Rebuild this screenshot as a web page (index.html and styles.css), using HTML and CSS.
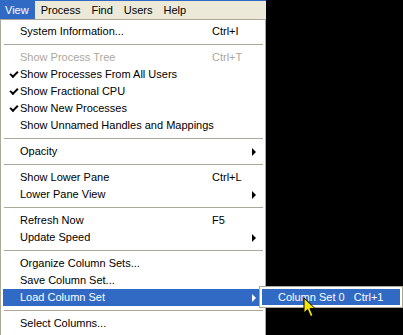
FILE: index.html
```html
<!DOCTYPE html>
<html lang="en">
<head>
  <meta charset="UTF-8" />
  <title>View menu</title>
  <link rel="stylesheet" href="styles.css">
</head>
<body>

<div class="screen">
  <div class="app">
    <div class="menubar">
      <span class="top-item open">View</span>
      <span class="top-item">Process</span>
      <span class="top-item">Find</span>
      <span class="top-item">Users</span>
      <span class="top-item">Help</span>
    </div>

    <div class="menu">
      <div class="item"><span class="label">System Information...</span><span class="key">Ctrl+I</span></div>
      <div class="sep"></div>
      <div class="item disabled"><span class="label">Show Process Tree</span><span class="key">Ctrl+T</span></div>
      <div class="item checked"><span class="label">Show Processes From All Users</span></div>
      <div class="item checked"><span class="label">Show Fractional CPU</span></div>
      <div class="item checked"><span class="label">Show New Processes</span></div>
      <div class="item"><span class="label">Show Unnamed Handles and Mappings</span></div>
      <div class="sep"></div>
      <div class="item sub"><span class="label">Opacity</span></div>
      <div class="sep"></div>
      <div class="item"><span class="label">Show Lower Pane</span><span class="key">Ctrl+L</span></div>
      <div class="item sub"><span class="label">Lower Pane View</span></div>
      <div class="sep"></div>
      <div class="item"><span class="label">Refresh Now</span><span class="key">F5</span></div>
      <div class="item sub"><span class="label">Update Speed</span></div>
      <div class="sep"></div>
      <div class="item"><span class="label">Organize Column Sets...</span></div>
      <div class="item"><span class="label">Save Column Set...</span></div>
      <div class="item sub active"><span class="label">Load Column Set</span></div>
      <div class="sep"></div>
      <div class="item"><span class="label">Select Columns...</span></div>
    </div>
  </div>

  <div class="submenu">
    <div class="sub-item">Column Set 0&nbsp;&nbsp; Ctrl+1</div>
  </div>

  <svg class="cursor" width="14" height="22" viewBox="0 0 14 22">
    <path d="M1 1 L1 16 L4.5 12.5 L7.5 19.5 L10 18.5 L7 11.5 L12 11.5 Z" fill="#f5e400" stroke="#000" stroke-width="1" stroke-linejoin="miter"/>
  </svg>
</div>

</body>
</html>
```

FILE: styles.css
```css
body {
  margin: 0;
  padding: 0;
  background: #000;
  font-family: 'Liberation Sans', Arial, sans-serif;
  font-size: 11px;
  color: #000;
}
.screen {
  position: relative;
  width: 403px;
  height: 335px;
  overflow: hidden;
  background: #000;
}
.app {
  width: 266px;
}
.menubar {
  display: flex;
  height: 18px;
  background: #ece9d8;
  border-top: 1px solid #316ac5;
}
.top-item {
  padding: 0 5px 0 5px;
  margin-right: 1px;
  line-height: 18px;
}
.top-item.open {
  background: #316ac5;
  color: #fff;
  padding-right: 6px;
}
.menu {
  background: #fff;
  border: 1px solid #aca899;
  padding: 3px 2px 2px;
  height: 330px;
  box-sizing: border-box;
}
.item {
  display: flex;
  height: 17px;
  line-height: 17px;
  padding-left: 17px;
  padding-right: 8px;
  position: relative;
}
.item .label {
  flex-grow: 1;
}
.item .key {
  width: 43px;
}
.item.disabled {
  color: #aca899;
}
.item.checked::before {
  content: "";
  position: absolute;
  left: 7px;
  top: 5px;
  width: 6px;
  height: 3px;
  border-left: 2px solid #000;
  border-bottom: 2px solid #000;
  transform: rotate(-45deg);
}
.item.sub::after {
  content: "";
  position: absolute;
  right: 7px;
  top: 5px;
  border-left: 4px solid #000;
  border-top: 4px solid transparent;
  border-bottom: 4px solid transparent;
}
.item.active {
  background: #316ac5;
  color: #fff;
}
.item.active::after {
  border-left-color: #fff;
}
.sep {
  height: 1px;
  background: #aca899;
  margin: 4px 0 4px 1px;
}
.submenu {
  position: absolute;
  left: 259px;
  top: 286px;
  width: 144px;
  height: 22px;
  box-sizing: border-box;
  border: 1px solid #aca899;
  background: #fff;
  padding: 2px;
}
.sub-item {
  background: #316ac5;
  color: #fff;
  height: 16px;
  line-height: 16px;
  padding-left: 16px;
}
.cursor {
  position: absolute;
  left: 303px;
  top: 297px;
}
```
